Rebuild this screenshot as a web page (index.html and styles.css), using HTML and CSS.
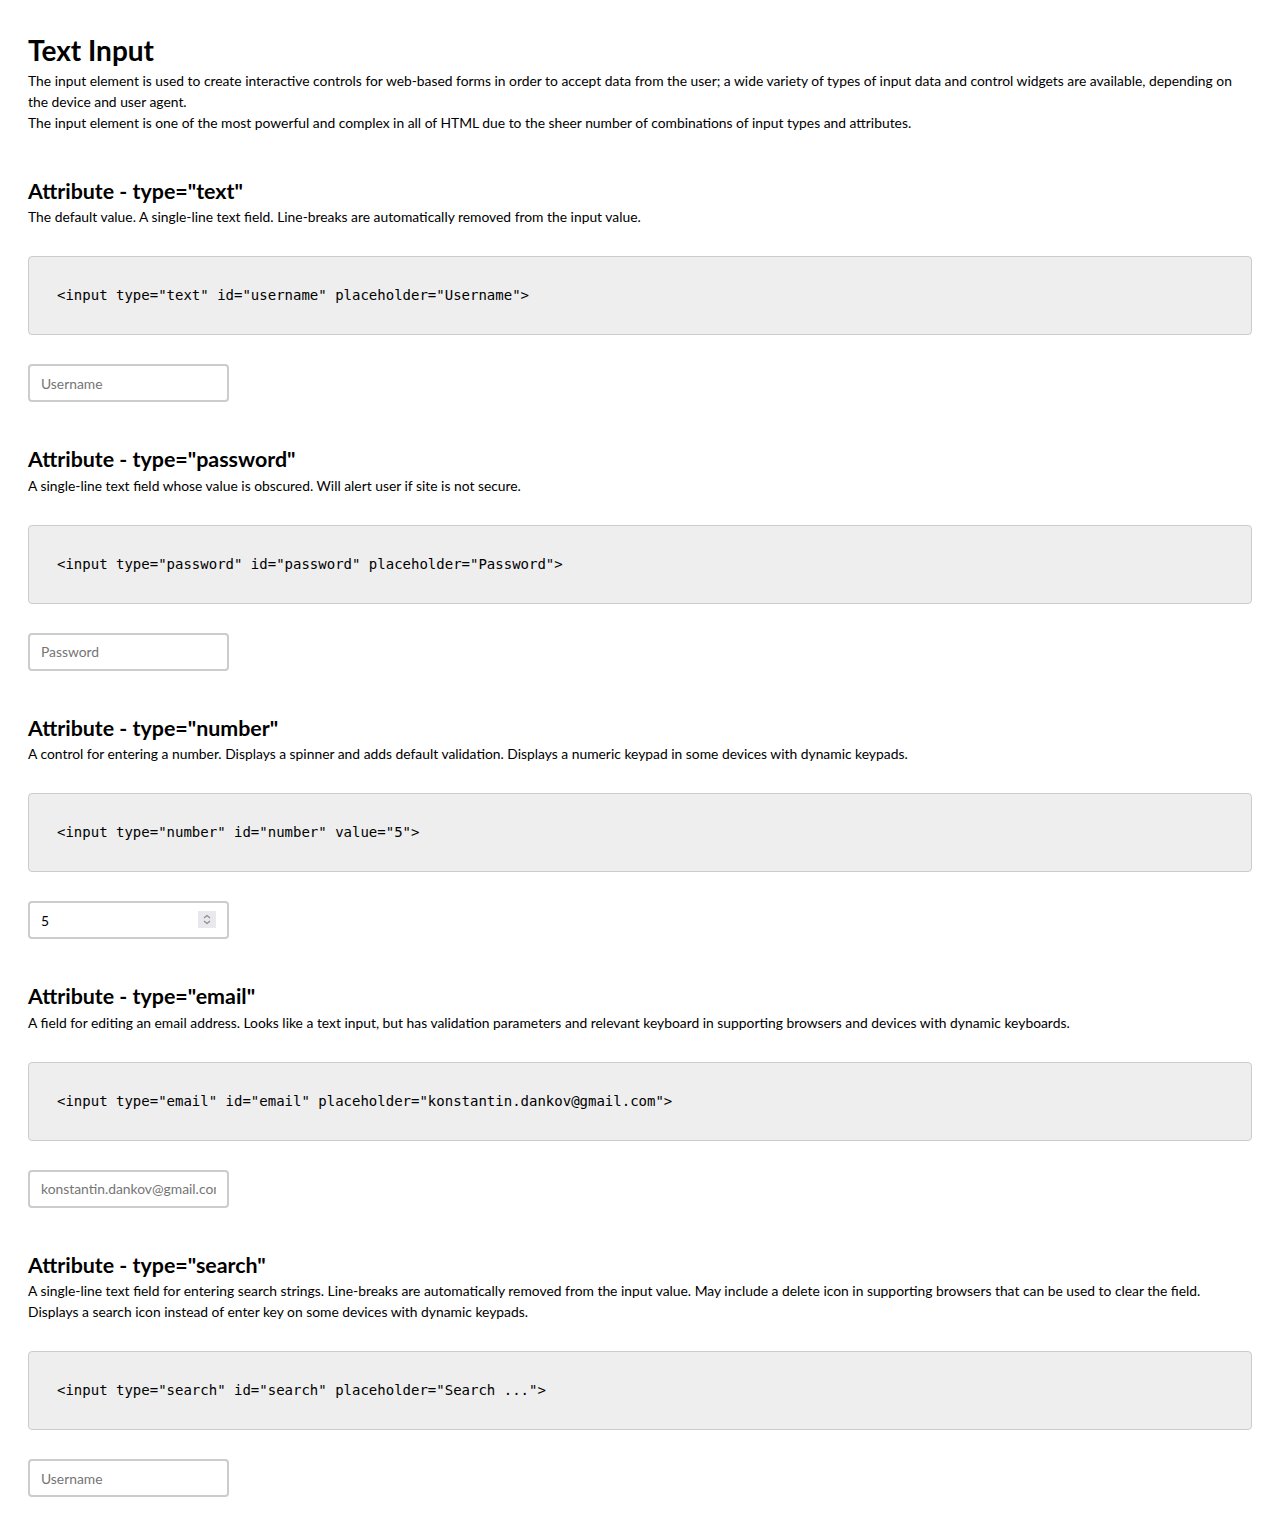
FILE: index.html
```html
<!DOCTYPE html>
<html lang="en">
<head>
<meta charset="utf-8">
<title>Text Input</title>
<link rel="stylesheet" href="styles.css">
</head>
<body>
<main class="page">
  <h1 class="title">Text Input</h1>
  <p class="intro">The input element is used to create interactive controls for web-based forms in order to accept data from the user; a wide variety of types of input data and control widgets are available, depending on the device and user agent.<br>The input element is one of the most powerful and complex in all of HTML due to the sheer number of combinations of input types and attributes.</p>

  <section class="section">
    <h2 class="section-title">Attribute - type="text"</h2>
    <p class="desc">The default value. A single-line text field. Line-breaks are automatically removed from the input value.</p>
    <pre class="code">&lt;input type="text" id="username" placeholder="Username"&gt;</pre>
    <input class="field" type="text" id="username" placeholder="Username">
  </section>

  <section class="section">
    <h2 class="section-title">Attribute - type="password"</h2>
    <p class="desc">A single-line text field whose value is obscured. Will alert user if site is not secure.</p>
    <pre class="code">&lt;input type="password" id="password" placeholder="Password"&gt;</pre>
    <input class="field" type="password" id="password" placeholder="Password">
  </section>

  <section class="section">
    <h2 class="section-title">Attribute - type="number"</h2>
    <p class="desc">A control for entering a number. Displays a spinner and adds default validation. Displays a numeric keypad in some devices with dynamic keypads.</p>
    <pre class="code">&lt;input type="number" id="number" value="5"&gt;</pre>
    <div class="number-wrap">
      <input class="field field-number" type="number" id="number" value="5">
      <span class="spinner" aria-hidden="true">
        <svg width="18" height="17" viewBox="0 0 18 17">
          <path d="M6 7 L9 4.5 L12 7" fill="none" stroke="#8a8a8a" stroke-width="1.1"/>
          <path d="M6 10 L9 12.5 L12 10" fill="none" stroke="#8a8a8a" stroke-width="1.1"/>
        </svg>
      </span>
    </div>
  </section>

  <section class="section">
    <h2 class="section-title">Attribute - type="email"</h2>
    <p class="desc">A field for editing an email address. Looks like a text input, but has validation parameters and relevant keyboard in supporting browsers and devices with dynamic keyboards.</p>
    <pre class="code">&lt;input type="email" id="email" placeholder="konstantin.dankov@gmail.com"&gt;</pre>
    <input class="field" type="email" id="email" placeholder="konstantin.dankov@gmail.com">
  </section>

  <section class="section">
    <h2 class="section-title">Attribute - type="search"</h2>
    <p class="desc">A single-line text field for entering search strings. Line-breaks are automatically removed from the input value. May include a delete icon in supporting browsers that can be used to clear the field.<br>Displays a search icon instead of enter key on some devices with dynamic keypads.</p>
    <pre class="code">&lt;input type="search" id="search" placeholder="Search ..."&gt;</pre>
    <input class="field" type="text" id="search" placeholder="Username">
  </section>
</main>
</body>
</html>
```
FILE: styles.css
```css
html, body {
  margin: 0;
  padding: 0;
  background: #fff;
}

body {
  font-family: Lato, "Noto Sans", sans-serif;
  color: #000;
}

.page {
  padding: 33px 28px 28px;
}

.title {
  font-size: 28px;
  line-height: 34px;
  font-weight: 700;
  margin: 0;
}

.intro {
  font-size: 13.85px;
  line-height: 21px;
  margin: 3px 0 0;
}

.section {
  display: flex;
  flex-direction: column;
  align-items: flex-start;
  margin-top: 44.5px;
}

.section + .section {
  margin-top: 44px;
}

.section-title {
  font-size: 21.4px;
  line-height: 26px;
  font-weight: 700;
  margin: 0;
}

.desc {
  font-size: 13.85px;
  line-height: 21px;
  margin: 2.5px 0 0;
}

.code {
  align-self: stretch;
  margin: 29px 0 0;
  padding: 29px 28px;
  background: #eeeeee;
  border: 1px solid #cccccc;
  border-radius: 4px;
  font-family: "DejaVu Sans Mono", monospace;
  font-size: 14px;
  line-height: 19px;
  color: #000;
}

.field {
  box-sizing: border-box;
  margin: 29px 0 0;
  width: 201px;
  height: 38px;
  padding: 0 11px;
  border: 2px solid #cccccc;
  border-radius: 4px;
  background: #fff;
  font-family: Lato, "Noto Sans", sans-serif;
  font-size: 13.85px;
  color: #000;
  outline: none;
}

.field::placeholder {
  color: #757575;
}

.number-wrap {
  position: relative;
  display: flex;
}

.field-number {
  -moz-appearance: textfield;
}

.field-number::-webkit-inner-spin-button,
.field-number::-webkit-outer-spin-button {
  -webkit-appearance: none;
  margin: 0;
}

.spinner {
  position: absolute;
  left: 170px;
  top: 39px;
  width: 18px;
  height: 17px;
  background: #e9e9ed;
  display: flex;
}
```
